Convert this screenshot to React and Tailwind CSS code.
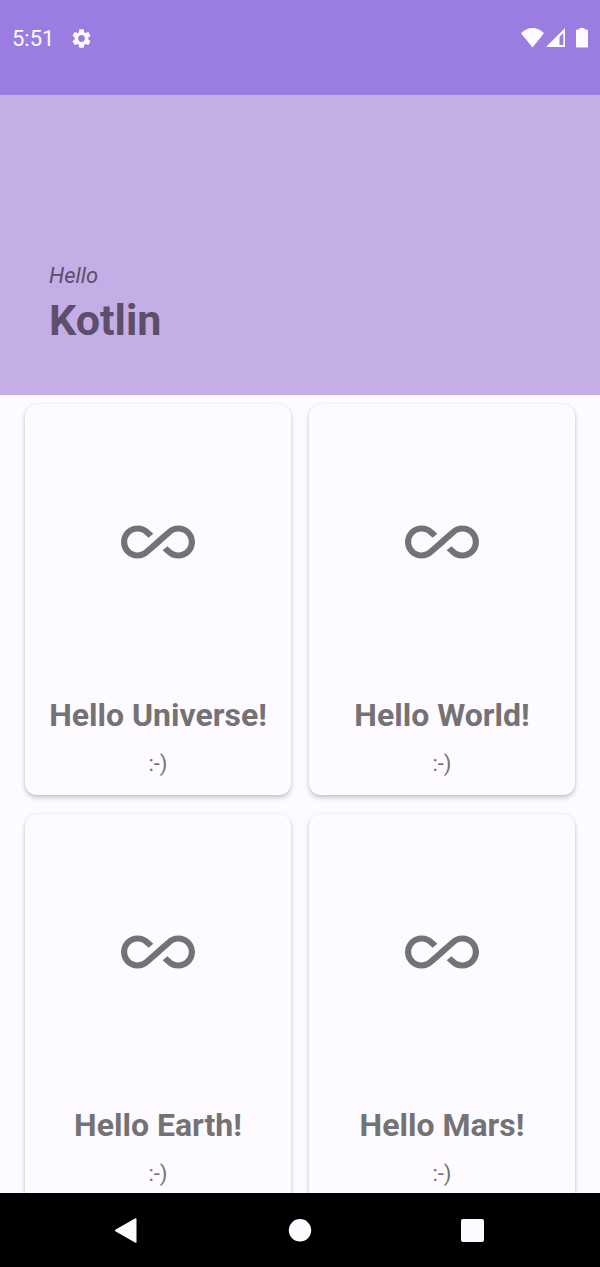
import { MdAllInclusive, MdSettings } from "react-icons/md";

const greetings = ["Hello Universe!", "Hello World!", "Hello Earth!", "Hello Mars!"];

function StatusBar() {
  return (
    <div className="flex h-[95px] shrink-0 items-start justify-between bg-[#9b7de1] px-3 pt-6 text-[#fdfbff]">
      <div className="flex h-7 items-center gap-4">
        <span className="pt-px text-[22px] leading-7">5:51</span>
        <MdSettings className="size-[23px]" />
      </div>
      <div className="flex h-7 items-center">
        <svg className="h-5 w-6" viewBox="0 0 24 20" fill="currentColor" aria-label="Wi-Fi">
          <path d="M11.5 19.5 0 5.2C3.2 2 7.2 0 11.5 0s8.300 2 11.500 5.200z" />
        </svg>
        <svg className="h-5 w-5" viewBox="0 0 20 20" fill="currentColor" aria-label="Signal">
          <path fillRule="evenodd" d="M20 0v19H1zM18.300 5l-3.800 4v8h3.800z" />
        </svg>
        <svg className="ml-[11px] h-5 w-3" viewBox="0 0 12 20" fill="currentColor" aria-label="Battery">
          <path d="M3.500 0h5v1.500H11q1 0 1 1v16q0 1-1 1H1q-1 0-1-1v-16q0-1 1-1h2.500z" />
        </svg>
      </div>
    </div>
  );
}

function GreetingCard({ title }) {
  return (
    <article className="flex flex-col items-center rounded-xl bg-[#fdfbff] pt-[101px] pb-[17px] text-[#747275] shadow-[0_3px_5px_rgba(0,0,0,0.2),0_0_2px_rgba(0,0,0,0.1)]">
      <MdAllInclusive className="size-[74px]" />
      <h2 className="mt-[116px] text-[32px] leading-10 font-bold whitespace-nowrap">{title}</h2>
      <p className="mt-[15px] text-[22px] leading-7">:-)</p>
    </article>
  );
}

function NavigationBar() {
  return (
    <nav className="flex h-[74px] shrink-0 items-center justify-center gap-[148px] bg-black text-[#fdfbff]">
      <button type="button" aria-label="Back">
        <svg className="size-6 overflow-visible" viewBox="0 0 24 24" fill="currentColor">
          <path d="M19 0.400Q20.500 -0.300 20.500 1v23q0 1.300-1.500 .600L-0.300 13.400Q-2 12.500 -0.300 11.600z" />
        </svg>
      </button>
      <button type="button" aria-label="Home">
        <svg className="size-6" viewBox="0 0 24 24" fill="currentColor">
          <circle cx="12" cy="12.300" r="11.200" />
        </svg>
      </button>
      <button type="button" aria-label="Recent apps">
        <svg className="size-6 overflow-visible" viewBox="0 0 24 24" fill="currentColor">
          <rect x="1" y="1" width="23" height="23" rx="2" />
        </svg>
      </button>
    </nav>
  );
}

export default function App() {
  return (
    <div className="flex h-screen flex-col bg-[#fdfbff] font-['Roboto',sans-serif]">
      <StatusBar />
      <header className="flex h-[300px] shrink-0 flex-col justify-end bg-[#c5aee6] px-[49px] pb-[49px] text-[#5d4e6c]">
        <p className="text-[22px] leading-7 italic">Hello</p>
        <h1 className="mt-1 text-[43px] leading-[52px] font-bold">Kotlin</h1>
      </header>
      <main className="grid min-h-0 flex-1 grid-cols-2 content-start gap-x-[18px] gap-y-[19px] overflow-y-auto px-[25px] py-[9px] [scrollbar-width:none]">
        {greetings.map((title) => (
          <GreetingCard key={title} title={title} />
        ))}
      </main>
      <NavigationBar />
    </div>
  );
}
